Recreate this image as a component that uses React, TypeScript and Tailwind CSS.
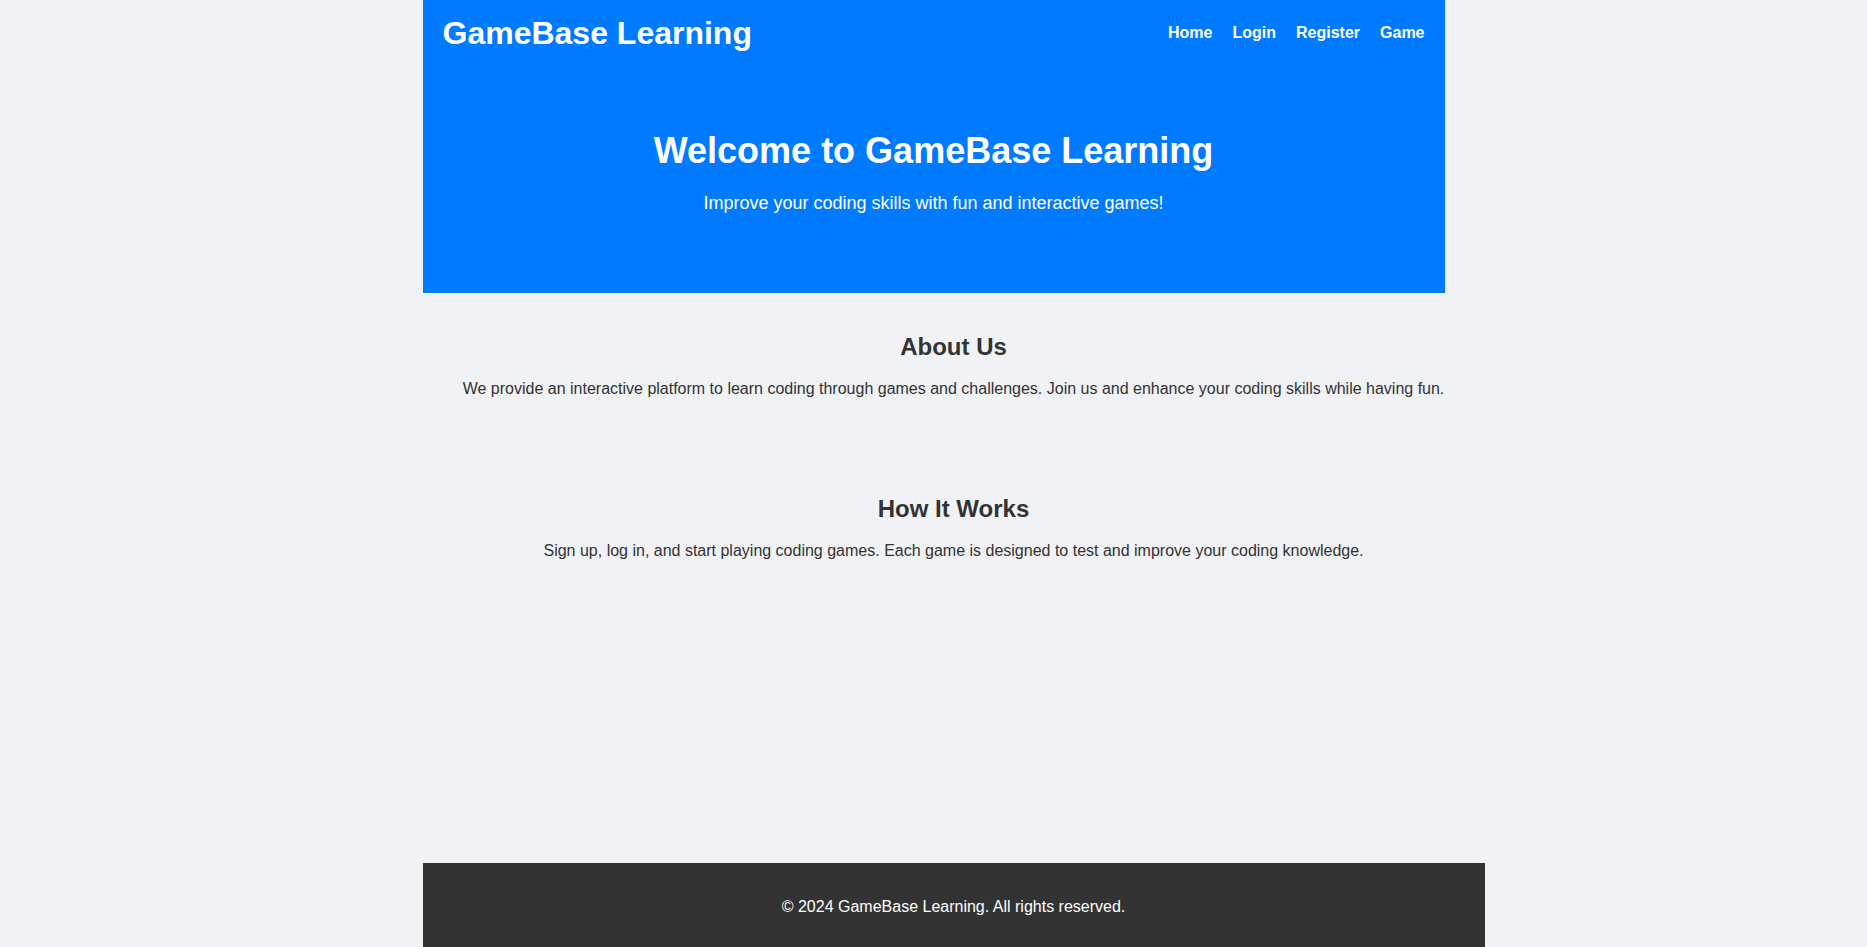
// App.tsx
import type React from "react";

/* ==================== DATI ==================== */

const NAV_LINKS = ["Home", "Login", "Register", "Game"];

const SECTIONS = [
  {
    title: "About Us",
    text: "We provide an interactive platform to learn coding through games and challenges. Join us and enhance your coding skills while having fun.",
  },
  {
    title: "How It Works",
    text: "Sign up, log in, and start playing coding games. Each game is designed to test and improve your coding knowledge.",
  },
];

/* ==================== PAGINA ==================== */

export default function App() {
  return (
    <div className="min-h-screen bg-[#f0f2f5] font-['Liberation_Sans',Arial,sans-serif] text-[#333]">
      <div className="mx-auto w-[1022px]">
        {/* HEADER + HERO */}
        <header className="h-[293px] bg-[#007bff] pt-[12px] text-white">
          <nav className="flex h-[42px] items-center justify-between px-5">
            <h1 className="text-[32px] font-bold leading-[37px]">
              GameBase Learning
            </h1>
            <ul className="flex items-center gap-5 text-base font-bold leading-[18px]">
              {NAV_LINKS.map((l) => (
                <li key={l}>
                  <a href="#" className="text-white">
                    {l}
                  </a>
                </li>
              ))}
            </ul>
          </nav>

          <div className="text-center">
            <h2 className="mt-[76px] text-[36px] font-bold leading-[41px]">
              Welcome to GameBase Learning
            </h2>
            <p className="mt-[22px] text-[18px] leading-[21px]">
              Improve your coding skills with fun and interactive games!
            </p>
          </div>
        </header>

        {/* CONTENUTI */}
        <main className="min-h-[570px] w-[1062px] pt-10">
          {SECTIONS.map((s, i) => (
            <Section key={s.title} title={s.title} first={i === 0}>
              {s.text}
            </Section>
          ))}
        </main>

        {/* FOOTER */}
        <footer className="w-[1062px] bg-[#333] pt-[35px] pb-[36px] text-center text-white">
          <p className="text-base leading-[18px]">
            © 2024 GameBase Learning. All rights reserved.
          </p>
        </footer>
      </div>
    </div>
  );
}

/* ==================== COMPONENTI ==================== */

function Section({
  title,
  first,
  children,
}: {
  title: string;
  first: boolean;
  children: React.ReactNode;
}) {
  return (
    <section className={first ? "px-5 text-center" : "mt-[97px] px-5 text-center"}>
      <h2 className="text-2xl font-bold leading-[28px]">{title}</h2>
      <p className="mt-[19px] text-base leading-[18px]">{children}</p>
    </section>
  );
}
